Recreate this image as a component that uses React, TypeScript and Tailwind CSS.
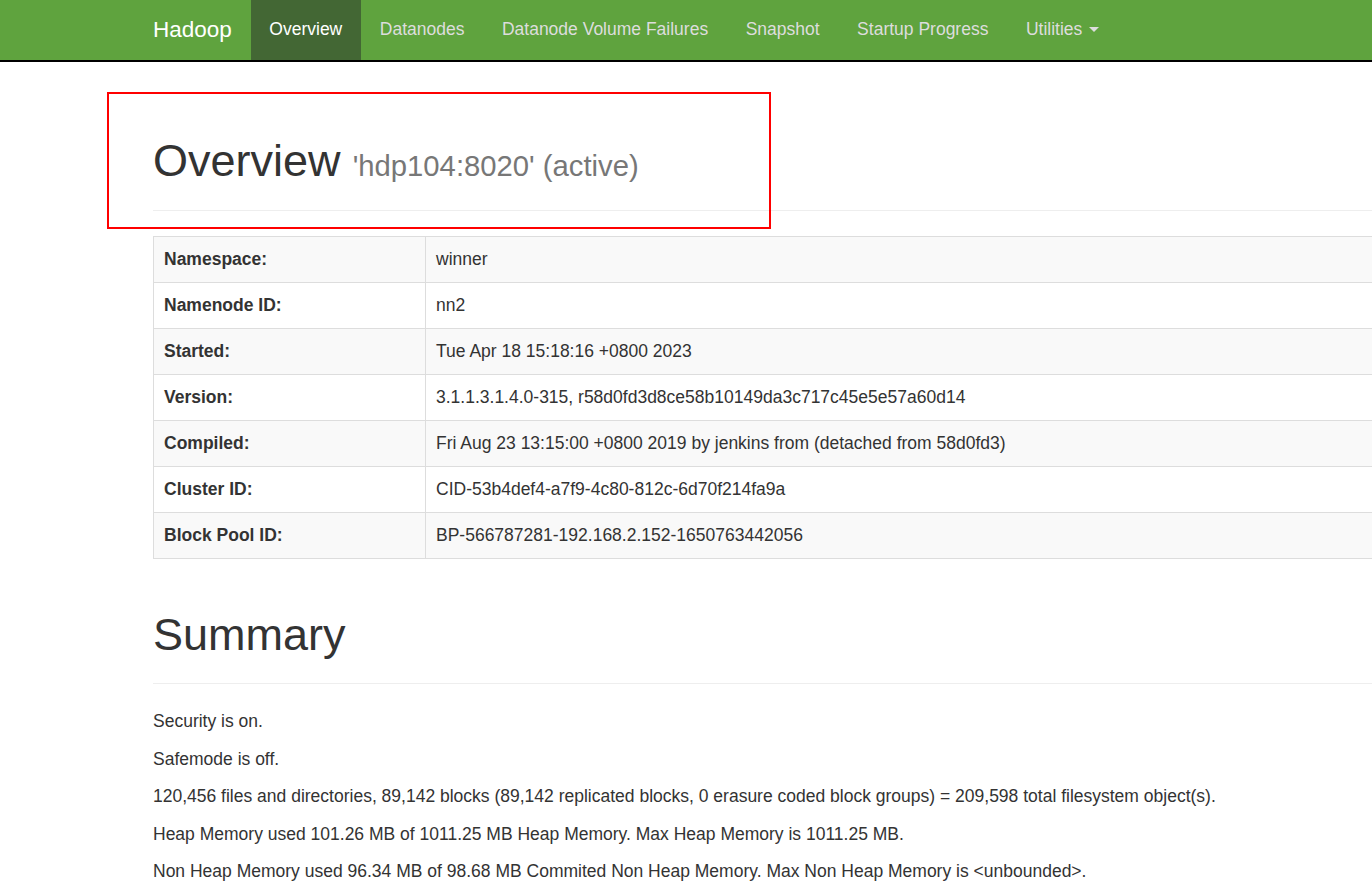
import React from "react";

const navLinks = [
  { label: "Overview", active: true },
  { label: "Datanodes" },
  { label: "Datanode Volume Failures" },
  { label: "Snapshot" },
  { label: "Startup Progress" },
];

const overviewRows: [string, string][] = [
  ["Namespace:", "winner"],
  ["Namenode ID:", "nn2"],
  ["Started:", "Tue Apr 18 15:18:16 +0800 2023"],
  ["Version:", "3.1.1.3.1.4.0-315, r58d0fd3d8ce58b10149da3c717c45e5e57a60d14"],
  ["Compiled:", "Fri Aug 23 13:15:00 +0800 2019 by jenkins from (detached from 58d0fd3)"],
  ["Cluster ID:", "CID-53b4def4-a7f9-4c80-812c-6d70f214fa9a"],
  ["Block Pool ID:", "BP-566787281-192.168.2.152-1650763442056"],
];

const summaryLines = [
  "Security is on.",
  "Safemode is off.",
  "120,456 files and directories, 89,142 blocks (89,142 replicated blocks, 0 erasure coded block groups) = 209,598 total filesystem object(s).",
  "Heap Memory used 101.26 MB of 1011.25 MB Heap Memory. Max Heap Memory is 1011.25 MB.",
  "Non Heap Memory used 96.34 MB of 98.68 MB Commited Non Heap Memory. Max Non Heap Memory is <unbounded>.",
];

const Navbar = () => (
  <nav className="h-[62px] bg-[#5fa33e] border-b-2 border-black">
    <div className="ml-[153px] flex h-[60px] items-center">
      <a className="pb-[2px] pr-[18.75px] text-[22.5px] leading-[25px] text-white">Hadoop</a>
      <ul className="flex h-full">
        {navLinks.map((link) => (
          <li key={link.label}>
            <a
              className={
                link.active
                  ? "flex h-[60px] items-center bg-[#436734] px-[18.75px] pb-[2px] text-[17.5px] text-white"
                  : "flex h-[60px] items-center px-[18.75px] pb-[2px] text-[17.5px] text-[#ddd]"
              }
            >
              {link.label}
            </a>
          </li>
        ))}
        <li>
          <a className="flex h-[60px] items-center px-[18.75px] pb-[2px] text-[17.5px] text-[#ddd]">
            Utilities
            <span className="ml-[7px] inline-block h-0 w-0 border-x-[5px] border-t-[5px] border-x-transparent border-t-[#ddd]" />
          </a>
        </li>
      </ul>
    </div>
  </nav>
);

const PageHeader = ({ title, small, className }: { title: string; small?: string; className: string }) => (
  <div className={`border-b border-[#eee] pb-[11px] ${className}`}>
    <h1 className="mb-[13px] text-[45px] font-normal leading-[49.5px] text-[#333]">
      {title}
      {small && <small className="pl-[4px] text-[29.25px] leading-none text-[#777]"> {small}</small>}
    </h1>
  </div>
);

export default function App() {
  return (
    <div
      className="relative w-[1372px] overflow-hidden bg-white text-[#333]"
      style={{ fontFamily: '"Liberation Sans", Arial, Helvetica, sans-serif', minHeight: 887 }}
    >
      <Navbar />
      <div className="ml-[153px] w-[1425px]">
        <PageHeader title="Overview" small="'hdp104:8020' (active)" className="mt-[74px]" />

        <table className="mt-[25px] w-full border-collapse border border-[#ddd] text-[17.5px] leading-[25px]">
          <tbody>
            {overviewRows.map(([label, value], i) => (
              <tr key={label} className={i % 2 === 0 ? "bg-[#f9f9f9]" : "bg-white"}>
                <th className="w-[272px] border border-[#ddd] p-[10px] text-left font-bold">{label}</th>
                <td className="border border-[#ddd] p-[10px]">{value}</td>
              </tr>
            ))}
          </tbody>
        </table>

        <PageHeader title="Summary" className="mt-[51px]" />

        <div className="mt-[25px] text-[17.5px] leading-[25px]">
          {summaryLines.map((line) => (
            <p key={line} className="mb-[12.5px]">
              {line}
            </p>
          ))}
        </div>
      </div>

      {/* red annotation box over the header */}
      <div className="pointer-events-none absolute left-[107px] top-[92px] h-[137px] w-[664px] border-2 border-[#ff0000]" />
    </div>
  );
}
